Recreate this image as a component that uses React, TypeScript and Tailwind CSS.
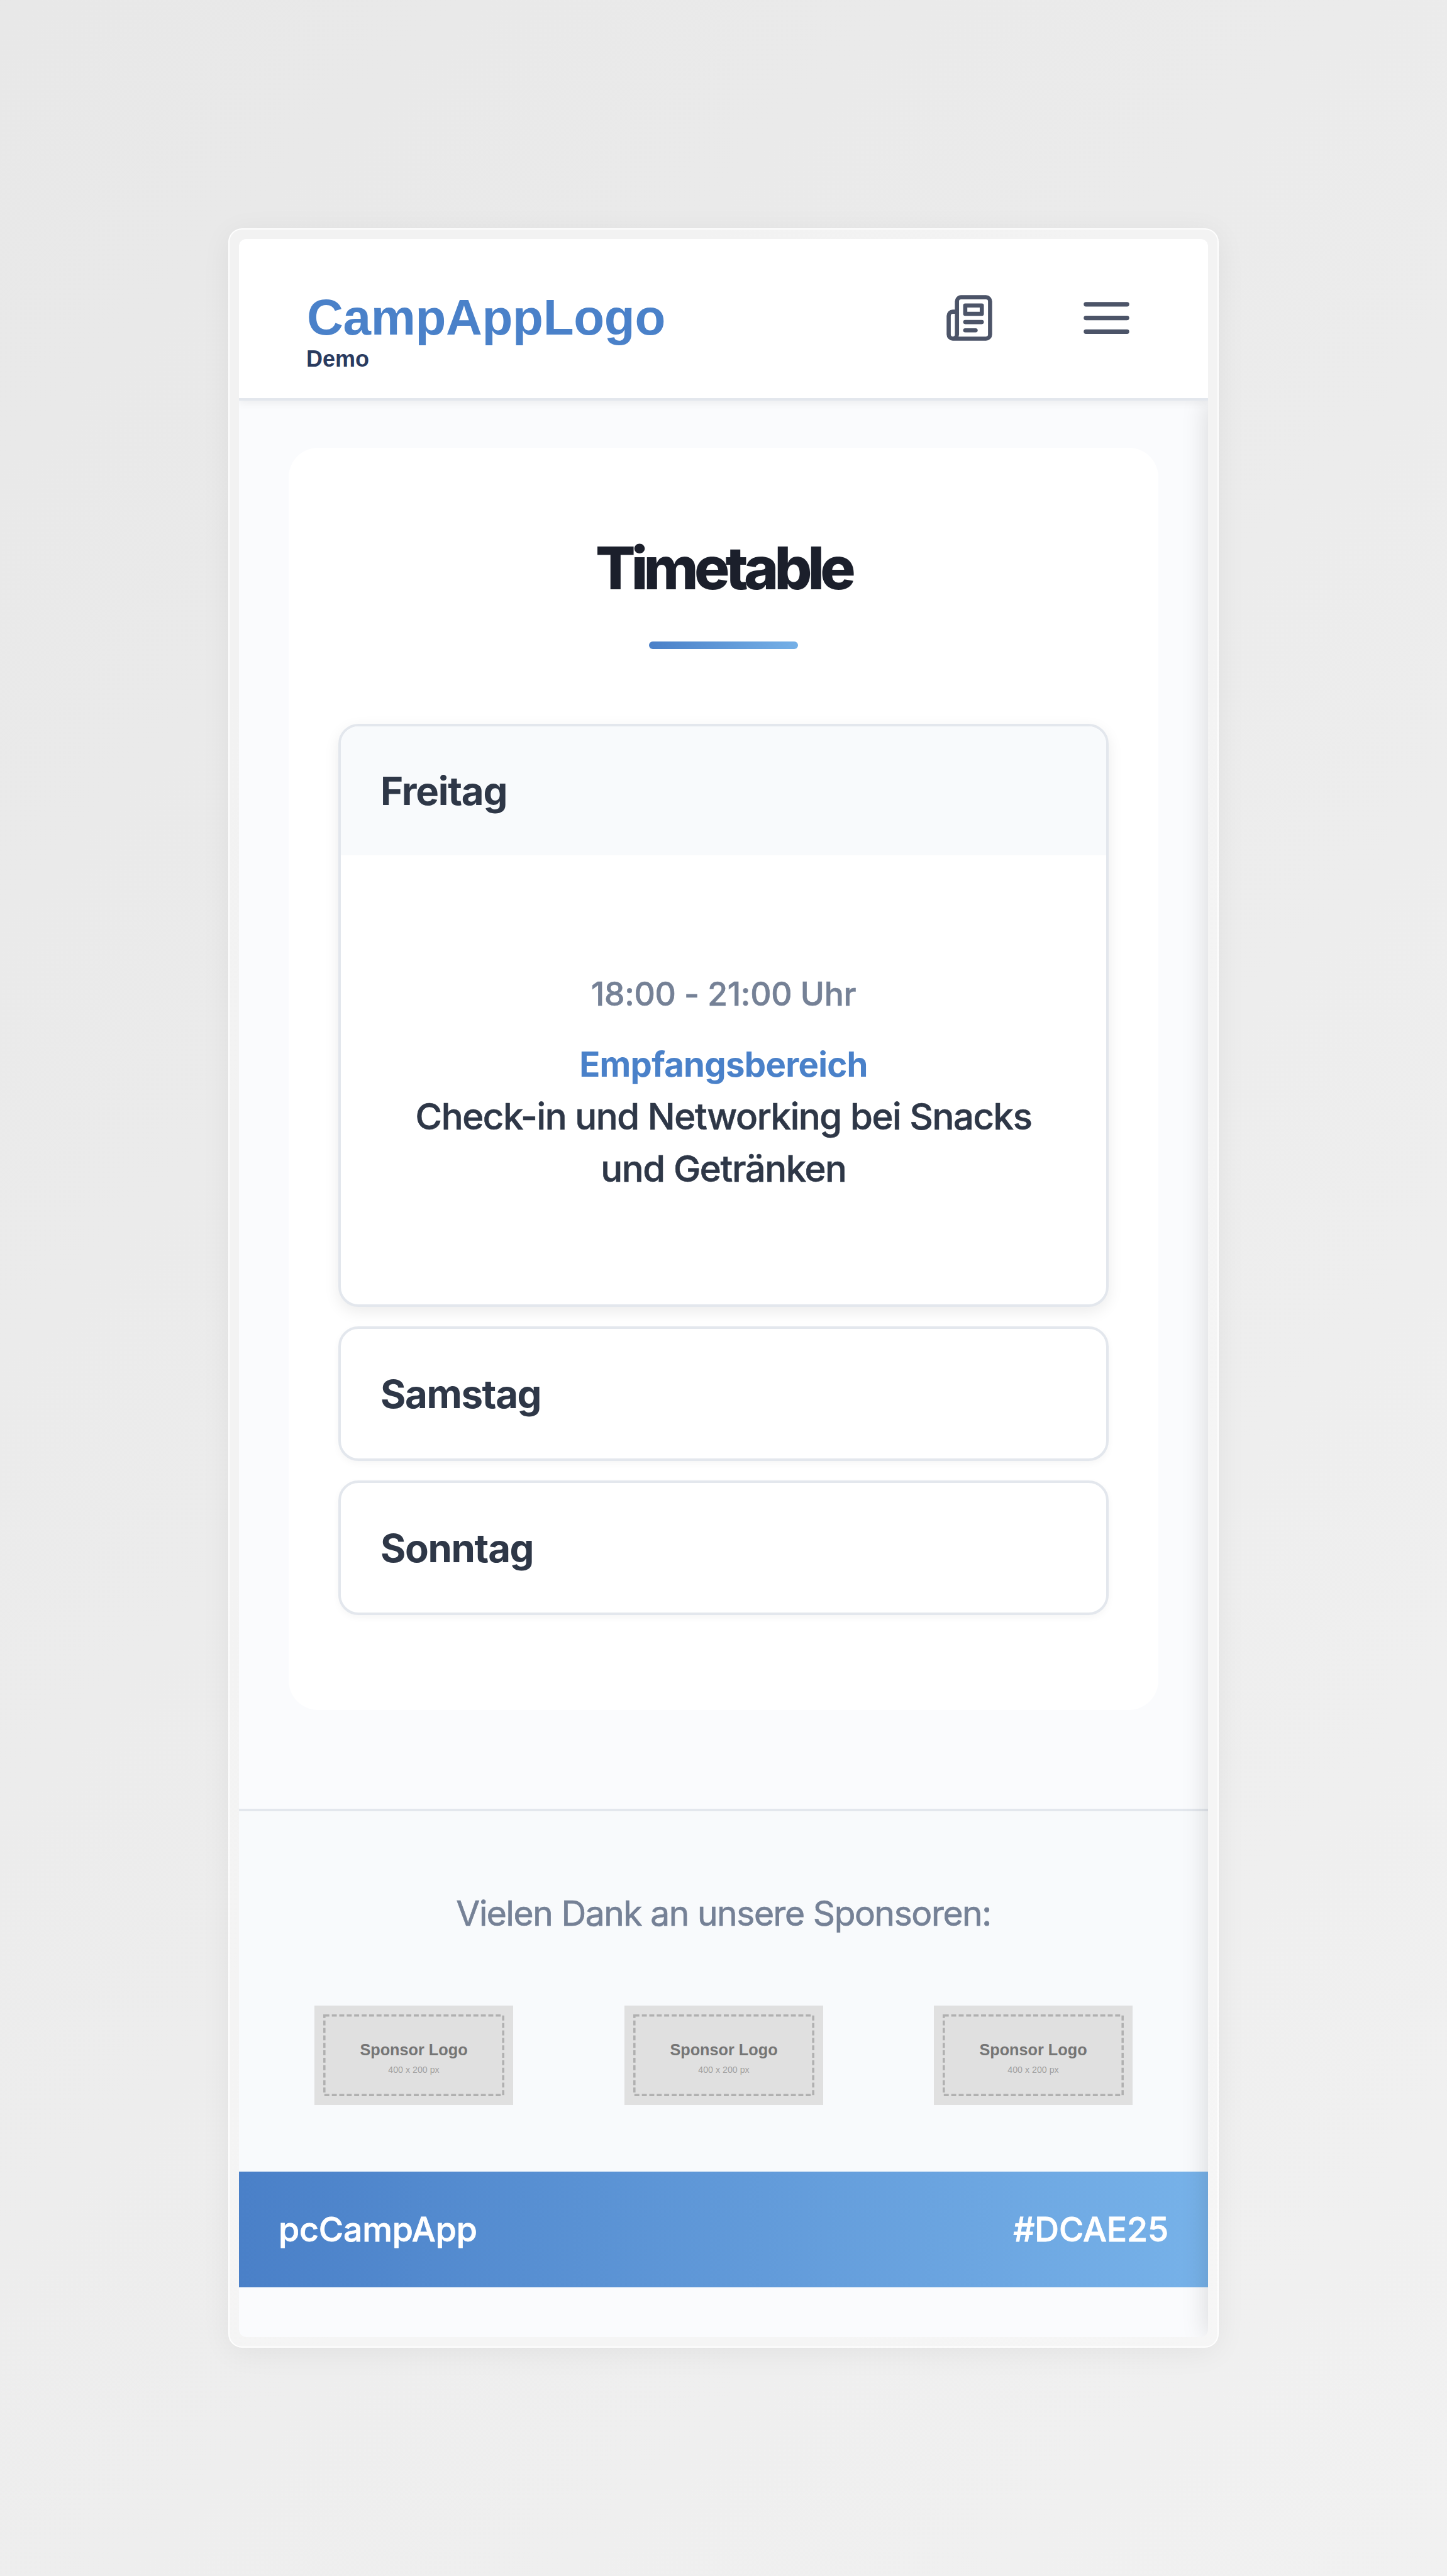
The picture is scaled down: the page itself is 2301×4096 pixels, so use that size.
const days = [
  {
    name: "Freitag",
    sessions: [
      {
        time: "18:00 - 21:00 Uhr",
        room: "Empfangsbereich",
        title: "Check-in und Networking bei Snacks und Getränken",
      },
    ],
  },
  { name: "Samstag", sessions: [] },
  { name: "Sonntag", sessions: [] },
];

function NewspaperIcon() {
  return (
    <svg
      className="size-[79px]"
      viewBox="0 0 24 24"
      fill="none"
      stroke="currentColor"
      strokeWidth="2"
      strokeLinecap="round"
      strokeLinejoin="round"
    >
      <path d="M4 22h16a2 2 0 0 0 2-2V4a2 2 0 0 0-2-2H8a2 2 0 0 0-2 2v16a2 2 0 0 1-2 2Zm0 0a2 2 0 0 1-2-2v-9c0-1.1.9-2 2-2h2" />
      <path d="M18 14h-8" />
      <path d="M15 18h-5" />
      <path d="M10 6h8v4h-8V6Z" />
    </svg>
  );
}

function MenuIcon() {
  return (
    <svg
      className="size-[87px]"
      viewBox="0 0 24 24"
      fill="none"
      stroke="currentColor"
      strokeWidth="2"
      strokeLinecap="round"
    >
      <path d="M3 6h18M3 12h18M3 18h18" />
    </svg>
  );
}

function Header() {
  return (
    <header className="relative z-10 flex h-[257px] shrink-0 items-start justify-between border-b-4 border-[#e3e7ed] bg-white pt-[85px] pr-[118px] pl-[107px] shadow-[0_4px_12px_rgba(0,0,0,0.06)]">
      <div className="font-['Liberation_Sans',sans-serif] font-bold">
        <div className="pl-px text-[80px] leading-[80px] tracking-[-0.3px] text-[#4a81c9]">CampAppLogo</div>
        <div className="text-[36px] leading-[52px] text-[#2a3b5f]">Demo</div>
      </div>
      <div className="flex h-[81px] items-center gap-[135px] text-[#4c5468]">
        <NewspaperIcon />
        <MenuIcon />
      </div>
    </header>
  );
}

function Timetable() {
  return (
    <section className="mx-[79px] mt-[75px] flex flex-col items-center rounded-[47px] bg-white px-[79px] pt-[141px] pb-[151px]">
      <h1 className="text-[94px] leading-[100px] font-extrabold tracking-[-0.073em] text-[#1b1f2b]">Timetable</h1>
      <div className="mt-[67px] h-3 w-[237px] rounded-[7px] bg-linear-90 from-[#4a80c8] to-[#75b0e7]" />
      <div className="mt-[119px] flex w-full flex-col gap-[31px]">
        {days.map((day) =>
          day.sessions.length > 0 ? (
            <article
              key={day.name}
              className="h-[927px] overflow-hidden rounded-[32px] border-4 border-[#e3e7ed] bg-white shadow-[0_8px_24px_rgba(0,0,0,0.08)]"
            >
              <h2 className="bg-[#f8fafc] pl-[63px] text-[61.7px] leading-[205px] font-bold tracking-[-0.02em] text-[#2e3747]">
                {day.name}
              </h2>
              {day.sessions.map((s) => (
                <div key={s.time} className="px-[100px] pt-[183px] text-center">
                  <p className="mb-[33px] text-[51.7px] leading-[75px] font-medium tracking-[-0.006em] text-[#758196] [-webkit-text-stroke:0.6px]">{s.time}</p>
                  <p className="text-[54.5px] leading-[83px] font-bold tracking-[-0.013em] text-[#4a81c9]">{s.room}</p>
                  <p className="text-[58px] leading-[83px] font-medium tracking-[-0.024em] text-[#2e3747] [-webkit-text-stroke:0.6px]">{s.title}</p>
                </div>
              ))}
            </article>
          ) : (
            <article
              key={day.name}
              className="rounded-[32px] border-4 border-[#e3e7ed] bg-white shadow-[0_4px_12px_rgba(0,0,0,0.04)]"
            >
              <h2 className="pt-[2px] pl-[63px] text-[61.7px] leading-[204px] font-bold tracking-[-0.022em] text-[#2e3747]">
                {day.name}
              </h2>
            </article>
          ),
        )}
      </div>
    </section>
  );
}

function SponsorLogo() {
  return (
    <svg
      className="h-[158px] w-[316px]"
      viewBox="0 0 400 200"
      fontFamily="'Liberation Sans', sans-serif"
      textAnchor="middle"
    >
      <rect width="400" height="200" fill="#e0e0e0" />
      <rect x="20" y="20" width="360" height="160" fill="none" stroke="#b0b0b0" strokeWidth="4.5" strokeDasharray="10 5" />
      <text x="200" y="100" fontSize="32" fontWeight="bold" fill="#757575">
        Sponsor Logo
      </text>
      <text x="200" y="135" fontSize="18" fill="#a0a0a0">
        400 x 200 px
      </text>
    </svg>
  );
}

function Footer() {
  return (
    <footer className="mt-[157px] border-t-4 border-[#e3e7ed] bg-[#f8fafc] pt-[122px]">
      <p className="text-center text-[55px] leading-[80px] tracking-[-0.025em] text-[#758196] [-webkit-text-stroke:0.7px]">
        Vielen Dank an unsere Sponsoren:
      </p>
      <div className="mt-[107px] flex justify-between px-[120px] pb-[106px]">
        <SponsorLogo />
        <SponsorLogo />
        <SponsorLogo />
      </div>
      <div className="flex h-[184px] items-center justify-between bg-linear-90 from-[#4a80c8] to-[#77b2e9] px-[63px] text-[53.7px] font-medium text-white [-webkit-text-stroke:0.8px]">
        <span className="tracking-[-0.004em]">pcCampApp</span>
        <span className="tracking-[-0.003em]">#DCAE25</span>
      </div>
    </footer>
  );
}

export default function App() {
  return (
    <div className="h-[4096px] w-[2301px] overflow-hidden bg-linear-135 from-[#e8e8e8] to-[#f1f1f1] pt-[363px] pl-[363px] font-['Inter',sans-serif]">
      <div className="h-[3370px] w-[1575px] rounded-[22px] border-2 border-white/90 bg-white/40 p-[15px] shadow-[0_8px_48px_rgba(0,0,0,0.06)]">
        <div className="relative flex h-[3336px] w-[1541px] flex-col overflow-hidden rounded-[12px] bg-[#fafbfd]">
          <Header />
          <main>
            <Timetable />
            <Footer />
          </main>
          <div className="absolute top-[257px] bottom-0 left-full w-40 shadow-[0_0_40px_rgba(0,0,0,0.15)]" />
        </div>
      </div>
    </div>
  );
}
